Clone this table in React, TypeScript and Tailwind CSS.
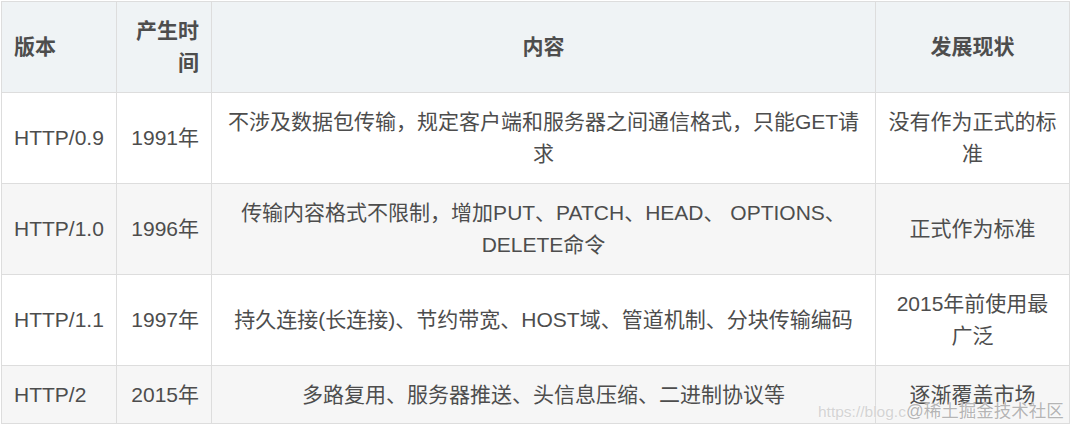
import React from "react";

const rows: { v: string; y: string; c: React.ReactNode; s: React.ReactNode; h: string; bg: string }[] = [
  {
    v: "HTTP/0.9",
    y: "1991年",
    c: (
      <>
        不涉及数据包传输，规定客户端和服务器之间通信格式，只能GET请
        <br />求
      </>
    ),
    s: (
      <>
        没有作为正式的标
        <br />准
      </>
    ),
    h: "h-[91px]",
    bg: "bg-white",
  },
  {
    v: "HTTP/1.0",
    y: "1996年",
    c: (
      <>
        传输内容格式不限制，增加PUT、PATCH、HEAD、 OPTIONS、
        <br />
        DELETE命令
      </>
    ),
    s: <>正式作为标准</>,
    h: "h-[91px]",
    bg: "bg-[#f6f6f6]",
  },
  {
    v: "HTTP/1.1",
    y: "1997年",
    c: <>持久连接(长连接)、节约带宽、HOST域、管道机制、分块传输编码</>,
    s: (
      <>
        2015年前使用最
        <br />广泛
      </>
    ),
    h: "h-[91px]",
    bg: "bg-white",
  },
  {
    v: "HTTP/2",
    y: "2015年",
    c: <>多路复用、服务器推送、头信息压缩、二进制协议等</>,
    s: <>逐渐覆盖市场</>,
    h: "h-[58px]",
    bg: "bg-[#f6f6f6]",
  },
];

export default function App() {
  const font = { fontFamily: '"Liberation Sans", Arial, "Noto Sans CJK SC", sans-serif' };
  const td = "border border-[#dddddd] px-3 align-middle whitespace-nowrap";
  return (
    <div className="relative w-[1071px] h-[425px] bg-white overflow-hidden pt-px pl-px" style={font}>
      <table className="table-fixed border-collapse w-[1068px] text-[21px] leading-[32px] text-[#4d4d4d]">
        <colgroup>
          <col className="w-[115px]" />
          <col className="w-[95px]" />
          <col className="w-[664px]" />
          <col className="w-[194px]" />
        </colgroup>
        <thead>
          <tr className="h-[91px] bg-[#eff3f5] font-bold">
            <th className={`${td} text-left`}>版本</th>
            <th className={`${td} text-right`}>
              产生时
              <br />间
            </th>
            <th className={`${td} text-center`}>内容</th>
            <th className={`${td} text-center`}>发展现状</th>
          </tr>
        </thead>
        <tbody>
          {rows.map((r) => (
            <tr key={r.v} className={`${r.h} ${r.bg}`}>
              <td className={`${td} text-left`}>{r.v}</td>
              <td className={`${td} text-right`}>{r.y}</td>
              <td className={`${td} text-center`}>{r.c}</td>
              <td className={`${td} text-center`}>{r.s}</td>
            </tr>
          ))}
        </tbody>
      </table>
      <div className="absolute left-[818px] top-[398px] flex items-baseline whitespace-nowrap">
        <span className="text-[15.5px] text-[#d4d4d4] [text-shadow:0_0_2px_#ffffff]">https://blog.c</span>
        <span className="text-[17.5px] text-[#b5b5b5] [text-shadow:0_0_2px_#ffffff,0_0_1px_#ffffff]">@稀土掘金技术社区</span>
      </div>
    </div>
  );
}
